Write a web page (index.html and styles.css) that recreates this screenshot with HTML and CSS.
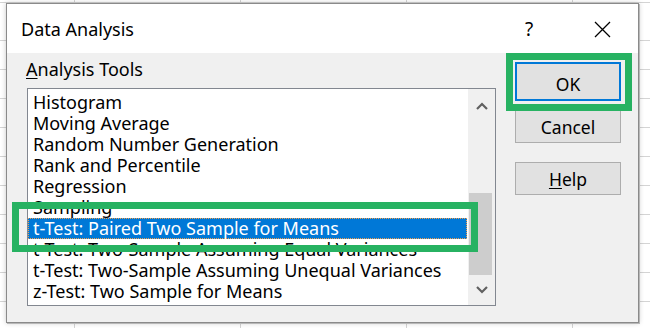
FILE: index.html
```html
<!DOCTYPE html>
<html lang="en">
<head>
    <meta charset="UTF-8">
    <meta name="viewport" content="width=device-width, initial-scale=1.0">
    <title>Data Analysis</title>
    <link rel="stylesheet" href="styles.css">
</head>
<body>
    <div class="dialog">
        <div class="titlebar">
            <span class="title">Data Analysis</span>
            <span class="tb-help">?</span>
            <span class="tb-close">
                <svg width="17" height="17" viewBox="0 0 17 17">
                    <path d="M1 1 L16 16 M16 1 L1 16" stroke="#000" stroke-width="1.3" fill="none"/>
                </svg>
            </span>
        </div>

        <div class="body">
            <div class="tools">
                <div class="label"><u>A</u>nalysis Tools</div>
                <div class="listbox">
                    <ul class="items">
                        <li>Histogram</li>
                        <li>Moving Average</li>
                        <li>Random Number Generation</li>
                        <li>Rank and Percentile</li>
                        <li>Regression</li>
                        <li>Sampling</li>
                        <li class="selected">t-Test: Paired Two Sample for Means</li>
                        <li>t-Test: Two-Sample Assuming Equal Variances</li>
                        <li>t-Test: Two-Sample Assuming Unequal Variances</li>
                        <li>z-Test: Two Sample for Means</li>
                    </ul>
                    <div class="scrollbar">
                        <div class="arrow arrow-up">
                            <svg width="12" height="8" viewBox="0 0 12 8">
                                <polyline points="1,7 6,2 11,7" stroke="#606060" stroke-width="2.2" fill="none"/>
                            </svg>
                        </div>
                        <div class="track">
                            <div class="thumb"></div>
                        </div>
                        <div class="arrow arrow-down">
                            <svg width="12" height="8" viewBox="0 0 12 8">
                                <polyline points="1,1 6,6 11,1" stroke="#606060" stroke-width="2.2" fill="none"/>
                            </svg>
                        </div>
                    </div>
                </div>
            </div>

            <div class="buttons">
                <div class="btn btn-default">OK</div>
                <div class="btn">Cancel</div>
                <div class="btn btn-help"><u>H</u>elp</div>
            </div>
        </div>

        <!-- green callouts drawn over the dialog -->
        <div class="mark mark-ok"></div>
        <div class="mark mark-row"></div>
    </div>
</body>
</html>
```

FILE: styles.css
```css
* {
    margin: 0;
    padding: 0;
    box-sizing: border-box;
}

body {
    font-family: 'Noto Sans', 'Open Sans', sans-serif;
    color: #000;
    height: 328px;
    overflow: hidden;
    padding: 3px 0 0 6px;
    background-color: #fff;
    background-image:
        repeating-linear-gradient(to right, transparent 0, transparent 74px, #d4d4d4 74px, #d4d4d4 75px, transparent 75px, transparent 166px),
        repeating-linear-gradient(to bottom, transparent 0, transparent 11px, #d4d4d4 11px, #d4d4d4 12px, transparent 12px, transparent 29px);
    background-position: 0 0, 0 29px;
}

.dialog {
    position: relative;
    width: 633px;
    height: 320px;
    border: 1px solid #8a8a8a;
    background: #f0f0f0;
    box-shadow: 1px 1px 0 #b8b8b8, 0 0 5px rgba(0, 0, 0, 0.22);
    display: flex;
    flex-direction: column;
}

/* title bar */
.titlebar {
    height: 49px;
    background: #fff;
    display: flex;
    align-items: center;
    padding: 0 16px 0 14px;
    font-size: 18px;
    line-height: 24px;
}

.title {
    flex: 1;
}

.tb-help {
    width: 40px;
    text-align: center;
    font-size: 19px;
}

.tb-close {
    width: 40px;
    margin-left: 33px;
    display: flex;
    justify-content: center;
    padding-top: 1px;
}

/* body */
.body {
    flex: 1;
    display: flex;
    padding: 4px 16px 0 20px;
}

.tools {
    display: flex;
    flex-direction: column;
}

.label {
    font-size: 18px;
    line-height: 24px;
    margin-left: -1px;
    margin-bottom: 7px;
}

u {
    text-decoration-thickness: 1px;
    text-underline-offset: 2px;
}

.listbox {
    width: 469px;
    height: 218px;
    border: 1px solid #828790;
    background: #fff;
    display: flex;
}

.items {
    flex: 1;
    list-style: none;
    padding-top: 3px;
    font-size: 18px;
    line-height: 21px;
    white-space: nowrap;
    overflow: hidden;
}

.items li {
    height: 21px;
    padding-left: 5px;
    margin-right: 1px;
}

.items li.selected {
    background: #0078d7;
    color: #fff;
    outline: 1px dotted #f0a050;
    outline-offset: -1px;
}

.scrollbar {
    width: 27px;
    background: #f0f0f0;
    display: flex;
    flex-direction: column;
}

.arrow {
    display: flex;
    align-items: center;
    justify-content: center;
}

.arrow-up {
    height: 33px;
}

.arrow-down {
    height: 30px;
    padding-bottom: 1px;
}

.track {
    flex: 1;
    display: flex;
    flex-direction: column;
    justify-content: flex-end;
}

.thumb {
    height: 82px;
    margin: 0 3px 0 1px;
    background: #cdcdcd;
}

/* buttons */
.buttons {
    margin-left: 19px;
    margin-top: 5px;
    display: flex;
    flex-direction: column;
    gap: 9px;
}

.btn {
    width: 106px;
    height: 33px;
    background: #e1e1e1;
    border: 1px solid #adadad;
    font-size: 17.5px;
    line-height: 24px;
    display: flex;
    align-items: center;
    justify-content: center;
}

.btn-default {
    height: 39px;
    border: 2px solid #0078d7;
    padding-top: 4px;
}

.btn-help {
    margin-top: 10px;
}

/* green highlight boxes */
.mark {
    position: absolute;
    border: 7px solid #27b262;
}

.mark-ok {
    left: 499px;
    top: 49px;
    width: 126px;
    height: 58px;
}

.mark-row {
    left: 5px;
    top: 198px;
    width: 466px;
    height: 50px;
}
```
